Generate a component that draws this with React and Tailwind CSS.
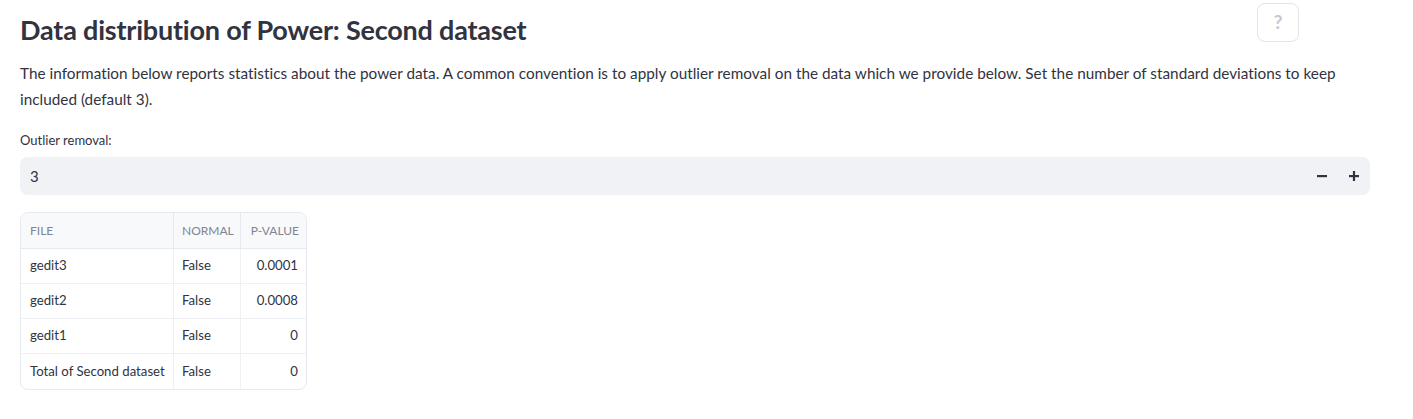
import React from "react";

const rows = [
  ["gedit3", "False", "0.0001"],
  ["gedit2", "False", "0.0008"],
  ["gedit1", "False", "0"],
  ["Total of Second dataset", "False", "0"],
];

export default function App() {
  return (
    <div className="w-[1413px] h-[419px] bg-white text-[#31333f] relative" style={{ fontFamily: "Lato, 'Noto Sans', sans-serif" }}>
      <button className="absolute left-[1257px] top-[3px] w-[42px] h-[39px] rounded-[8px] border border-[#e1e4e8] bg-white text-[#c3cad3] text-[19px] font-bold leading-none flex items-center justify-center pb-[2px]">?</button>
      <div className="px-[20px] pt-[12px] w-[1390px]">
        <h2 className="text-[27px] font-bold leading-[36px] tracking-[-0.2px]">Data distribution of Power: Second dataset</h2>
        <p className="mt-[12px] text-[15.3px] leading-[26px] tracking-[0.02px]">
          The information below reports statistics about the power data. A common convention is to apply outlier removal on the data which we provide below. Set the number of standard deviations to keep included (default 3).
        </p>
        <div className="mt-[19px] text-[13px] leading-[18px]">Outlier removal:</div>
        <div className="mt-[8px] h-[38px] rounded-[8px] bg-[#f0f2f6] flex items-center pl-[10px] pr-0">
          <span className="flex-1 text-[15px]">3</span>
          <span className="w-[32px] flex items-center justify-center">
            <svg width="10" height="10" viewBox="0 0 10 10"><rect x="0" y="4" width="10" height="2.2" fill="#31333f" /></svg>
          </span>
          <span className="w-[32px] flex items-center justify-center">
            <svg width="10" height="10" viewBox="0 0 10 10"><rect x="0" y="4" width="10" height="2.2" fill="#31333f" /><rect x="3.9" y="0" width="2.2" height="10" fill="#31333f" /></svg>
          </span>
        </div>
        <div className="mt-[17px] w-[287px] rounded-[8px] border border-[#e6e9ef] overflow-hidden">
          <div className="grid grid-cols-[153px_67px_65px] h-[36px] bg-[#f8f9fb] border-b border-[#e6e9ef] text-[12px] text-[#808495] whitespace-nowrap">
            <div className="flex items-center px-[9px] border-r border-[#e6e9ef]">FILE</div>
            <div className="flex items-center px-[8px] border-r border-[#e6e9ef]">NORMAL</div>
            <div className="flex items-center justify-end px-[7px]">P-VALUE</div>
          </div>
          {rows.map((r, i) => (
            <div key={i} className={"grid grid-cols-[153px_67px_65px] h-[35px] text-[13.2px] " + (i < rows.length - 1 ? "border-b border-[#eef0f4]" : "")}>
              <div className="flex items-center px-[9px] border-r border-[#eef0f4] whitespace-nowrap">{r[0]}</div>
              <div className="flex items-center px-[8px] border-r border-[#eef0f4]">{r[1]}</div>
              <div className="flex items-center justify-end px-[8px]">{r[2]}</div>
            </div>
          ))}
        </div>
      </div>
    </div>
  );
}
